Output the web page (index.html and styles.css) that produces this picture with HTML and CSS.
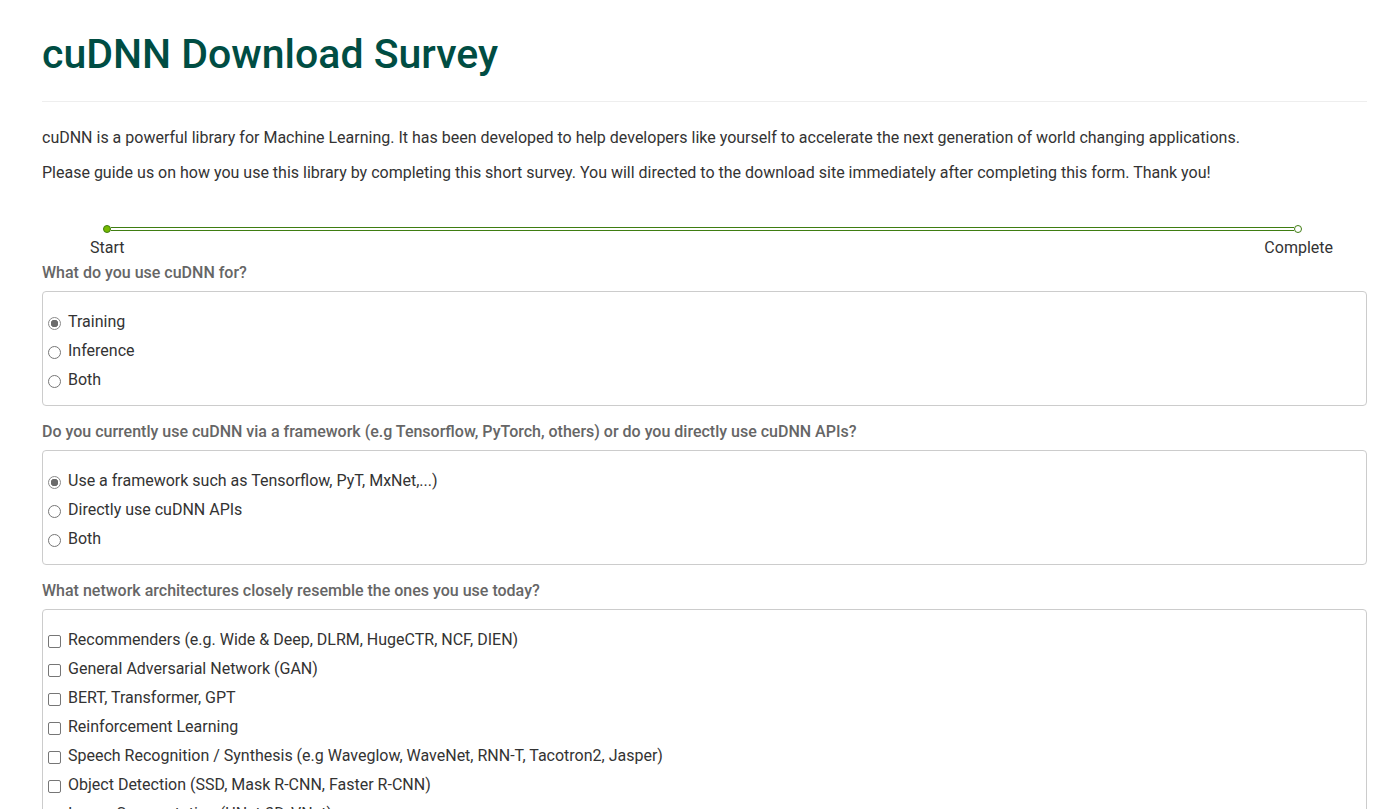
FILE: index.html
```html
<!DOCTYPE html>
<html>
<head>
<meta charset="utf-8">
<link rel="stylesheet" href="styles.css">
</head>
<body>
<div class="page">
  <h1 class="title">cuDNN Download Survey</h1>
  <div class="rule"></div>
  <p class="intro">cuDNN is a powerful library for Machine Learning. It has been developed to help developers like yourself to accelerate the next generation of world changing applications.</p>
  <p class="intro">Please guide us on how you use this library by completing this short survey. You will directed to the download site immediately after completing this form. Thank you!</p>

  <div class="progress">
    <div class="track">
      <span class="dot dot-start"></span>
      <span class="line"></span>
      <span class="dot dot-end"></span>
    </div>
    <div class="labels">
      <span>Start</span>
      <span>Complete</span>
    </div>
  </div>

  <div class="question">What do you use cuDNN for?</div>
  <div class="box">
    <label class="opt"><input type="radio" name="q1" checked><span>Training</span></label>
    <label class="opt"><input type="radio" name="q1"><span>Inference</span></label>
    <label class="opt"><input type="radio" name="q1"><span>Both</span></label>
  </div>

  <div class="question">Do you currently use cuDNN via a framework (e.g Tensorflow, PyTorch, others) or do you directly use cuDNN APIs?</div>
  <div class="box">
    <label class="opt"><input type="radio" name="q2" checked><span>Use a framework such as Tensorflow, PyT, MxNet,...)</span></label>
    <label class="opt"><input type="radio" name="q2"><span>Directly use cuDNN APIs</span></label>
    <label class="opt"><input type="radio" name="q2"><span>Both</span></label>
  </div>

  <div class="question">What network architectures closely resemble the ones you use today?</div>
  <div class="box">
    <label class="opt"><input type="checkbox"><span>Recommenders (e.g. Wide &amp; Deep, DLRM, HugeCTR, NCF, DIEN)</span></label>
    <label class="opt"><input type="checkbox"><span>General Adversarial Network (GAN)</span></label>
    <label class="opt"><input type="checkbox"><span>BERT, Transformer, GPT</span></label>
    <label class="opt"><input type="checkbox"><span>Reinforcement Learning</span></label>
    <label class="opt"><input type="checkbox"><span>Speech Recognition / Synthesis (e.g Waveglow, WaveNet, RNN-T, Tacotron2, Jasper)</span></label>
    <label class="opt"><input type="checkbox"><span>Object Detection (SSD, Mask R-CNN, Faster R-CNN)</span></label>
    <label class="opt"><input type="checkbox"><span>Image Segmentation (UNet-3D, VNet)</span></label>
    <label class="opt"><input type="checkbox"><span>Image Classification (ResNet-50, Inception, EfficientNet)</span></label>
    <label class="opt"><input type="checkbox"><span>Other</span></label>
  </div>
</div>
</body>
</html>
```

FILE: styles.css
```css
html, body {
  margin: 0;
  padding: 0;
  background: #fff;
}
body {
  font-family: Roboto, "Liberation Sans", sans-serif;
  color: #333;
  font-size: 16px;
}
.page {
  margin: 0 14px 0 42px;
  padding-top: 28px;
}
.title {
  margin: 0;
  font-size: 41px;
  font-weight: 500;
  color: #004d43;
  line-height: 52px;
}
.rule {
  height: 1px;
  background: #eee;
  margin-top: 21px;
  margin-bottom: 25px;
}
.intro {
  margin: 0 0 14px 0;
  line-height: 21px;
}
.progress {
  margin-top: 42px;
}
.track {
  display: flex;
  align-items: center;
  margin: 0 65px 0 61px;
  height: 8px;
}
.line {
  flex: 1;
  height: 2px;
  border-top: 1px solid #3f7d12;
  border-bottom: 1px solid #3f7d12;
  background: #fff;
}
.dot {
  width: 6px;
  height: 6px;
  border-radius: 50%;
  border: 1px solid #3f7d12;
  flex: none;
}
.dot-start { background: #76b900; }
.dot-end { background: #fff; }
.labels {
  display: flex;
  justify-content: space-between;
  margin: 5px 34px 0 48px;
  line-height: 20px;
}
.question {
  margin-top: 4px;
  color: #666;
  font-weight: 500;
  line-height: 22px;
}
.box {
  margin-top: 7px;
  border: 1px solid #ccc;
  border-radius: 4px;
  padding: 15px 5px 11px;
  display: flex;
  flex-direction: column;
  margin-bottom: 15px;
}
.opt {
  display: flex;
  align-items: center;
  height: 29px;
}
.opt span {
  margin-left: 7px;
}
.opt input {
  appearance: none;
  -webkit-appearance: none;
  width: 13px;
  height: 13px;
  margin: 4px 0 0 0;
  border: 1px solid #767676;
  background: #fff;
  flex: none;
  box-sizing: border-box;
}
.opt input[type="radio"] {
  border-radius: 50%;
}
.opt input[type="radio"]:checked {
  background: radial-gradient(circle, #6b6b6b 0 3.5px, #fff 4px);
  border-color: #8a8a8a;
}
.opt input[type="checkbox"] {
  border-radius: 2px;
}
```
